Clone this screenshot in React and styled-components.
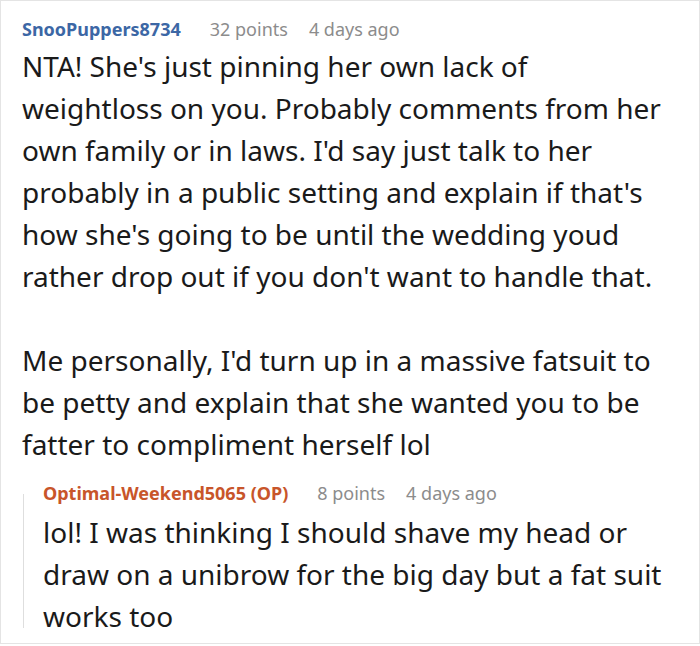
import React from 'react';
import styled, {createGlobalStyle} from 'styled-components';

const Global = createGlobalStyle`
    body {
        margin: 0;
        background: #fff;
    }
`;

const Card = styled.div`
    box-sizing: border-box;
    width: 700px;
    height: 644px;
    border: 1px solid #e4e4e4;
    padding: 16px 37px 0 21px;
    font-family: "Noto Sans", sans-serif;
    color: #1a1a1a;
    overflow: hidden;
`;

const Meta = styled.div`
    display: flex;
    align-items: baseline;
    gap: 21px;
    font-size: 18px;
    line-height: 24px;
`;

const Author = styled.span`
    font-weight: bold;
    margin-right: 8px;
    color: ${p => (p.$op ? '#c8552a' : '#3c67a5')};
`;

const Info = styled.span`
    color: #8c8c8c;
`;

const Body = styled.div`
    font-size: 28px;
    line-height: 42px;
    margin-top: ${p => p.$gap}px;
`;

const Para = styled.p`
    margin: 0 0 42px;
    &:last-child {
        margin-bottom: 0;
    }
`;

const Reply = styled.div`
    position: relative;
    margin-top: 16px;
    padding-left: 21px;

    &::before {
        content: '';
        position: absolute;
        left: 1px;
        top: 13px;
        bottom: 9px;
        border-left: 1px solid #dedede;
    }
`;

const Comment = ({author, op, points, age, gap = 4, paragraphs}) => (
  <div>
    <Meta>
      <Author $op={op}>{author}</Author>
      <Info>{points} points</Info>
      <Info>{age}</Info>
    </Meta>
    <Body $gap={gap}>
      {paragraphs.map((t, i) => <Para key={i}>{t}</Para>)}
    </Body>
  </div>
);

const App = () => (
  <Card>
    <Global />
    <Comment
      author="SnooPuppers8734"
      points={32}
      age="4 days ago"
      paragraphs={[
        "NTA! She's just pinning her own lack of weightloss on you. Probably comments from her own family or in laws. I'd say just talk to her probably in a public setting and explain if that's how she's going to be until the wedding youd rather drop out if you don't want to handle that.",
        "Me personally, I'd turn up in a massive fatsuit to be petty and explain that she wanted you to be fatter to compliment herself lol"
      ]}
    />
    <Reply>
      <Comment
        author="Optimal-Weekend5065 (OP)"
        op
        points={8}
        age="4 days ago"
        gap={6}
        paragraphs={[
          "lol! I was thinking I should shave my head or draw on a unibrow for the big day but a fat suit works too"
        ]}
      />
    </Reply>
  </Card>
);

export default App;
